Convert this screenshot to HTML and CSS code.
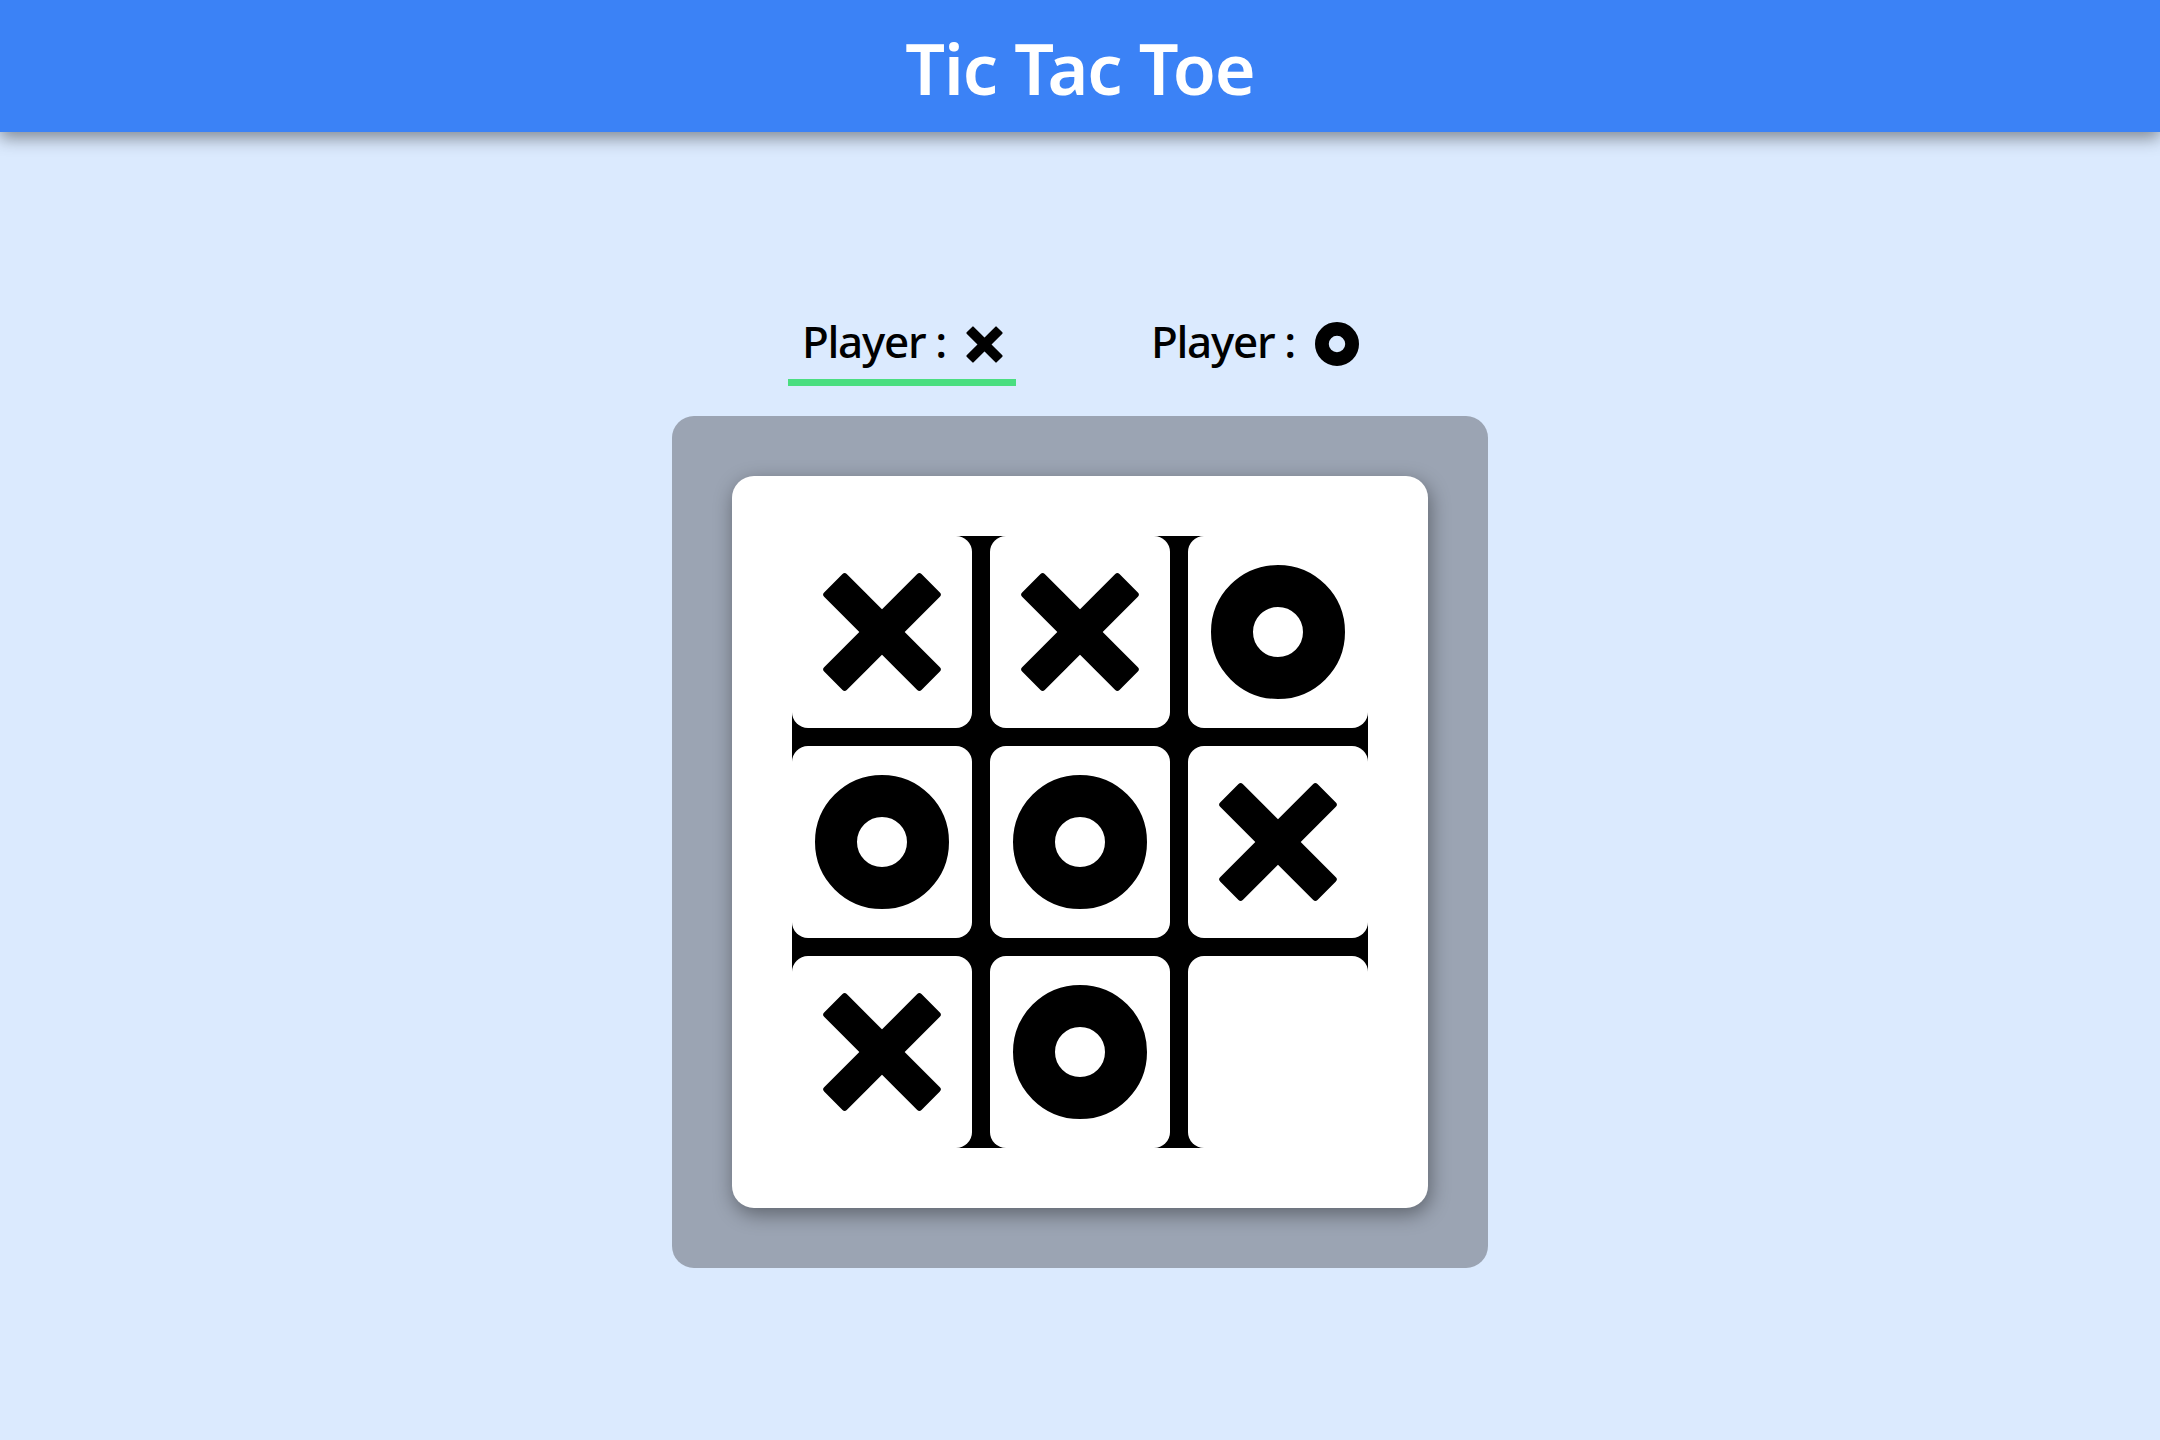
FILE: index.html
```html
<!DOCTYPE html>
<html lang="en">
<head>
<meta charset="utf-8">
<title>Tic Tac Toe</title>
<link rel="stylesheet" href="styles.css">
</head>
<body>
<svg class="defs" width="0" height="0" aria-hidden="true">
  <defs>
    <symbol id="mark-x" viewBox="0 0 120 120">
      <g transform="rotate(45 60 60)">
        <rect x="-8.85" y="44" width="137.7" height="32" rx="3"/>
        <rect x="44" y="-8.85" width="32" height="137.7" rx="3"/>
      </g>
    </symbol>
    <symbol id="mark-o" viewBox="0 0 134 134">
      <circle cx="67" cy="67" r="46" fill="none" stroke="currentColor" stroke-width="42"/>
    </symbol>
  </defs>
</svg>
<header class="topbar">
  <h1 class="title">Tic Tac Toe</h1>
</header>
<main class="game">
  <div class="players">
    <div class="player player--active">
      <span class="player-label">Player :</span>
      <svg class="player-icon player-icon--x"><use href="#mark-x"/></svg>
    </div>
    <div class="player">
      <span class="player-label">Player :</span>
      <svg class="player-icon player-icon--o"><use href="#mark-o"/></svg>
    </div>
  </div>
  <div class="board-frame">
    <div class="board">
      <div class="grid">
        <div class="cell"><svg class="mark mark--x"><use href="#mark-x"/></svg></div>
        <div class="cell"><svg class="mark mark--x"><use href="#mark-x"/></svg></div>
        <div class="cell"><svg class="mark mark--o"><use href="#mark-o"/></svg></div>
        <div class="cell"><svg class="mark mark--o"><use href="#mark-o"/></svg></div>
        <div class="cell"><svg class="mark mark--o"><use href="#mark-o"/></svg></div>
        <div class="cell"><svg class="mark mark--x"><use href="#mark-x"/></svg></div>
        <div class="cell"><svg class="mark mark--x"><use href="#mark-x"/></svg></div>
        <div class="cell"><svg class="mark mark--o"><use href="#mark-o"/></svg></div>
        <div class="cell"></div>
      </div>
    </div>
  </div>
</main>
</body>
</html>
```

FILE: styles.css
```css
* {
  box-sizing: border-box;
}

html, body {
  margin: 0;
  padding: 0;
}

body {
  min-height: 100vh;
  background: #dbeafe;
  font-family: "Noto Sans", "Open Sans", sans-serif;
  color: #000;
}

.defs {
  position: absolute;
  width: 0;
  height: 0;
  overflow: hidden;
}

.topbar {
  height: 132px;
  background: #3b82f6;
  box-shadow: 0 6px 16px rgba(0, 0, 0, 0.42);
  display: flex;
  justify-content: center;
  align-items: flex-start;
  position: relative;
  z-index: 1;
}

.title {
  margin: 0;
  padding-top: 21px;
  font-size: 70px;
  line-height: 95px;
  font-weight: 600;
  letter-spacing: -1px;
  color: #fff;
}

.game {
  display: flex;
  flex-direction: column;
  align-items: center;
  padding-top: 179px;
}

.players {
  display: flex;
  justify-content: center;
  gap: 121px;
}

.player {
  display: flex;
  align-items: center;
  padding: 0 13px 8px 14px;
  border-bottom: 7px solid transparent;
}

.player--active {
  border-bottom-color: #4ade80;
}

.player-label {
  font-size: 44px;
  line-height: 60px;
  font-weight: 500;
  letter-spacing: -1.3px;
}

.player-icon {
  fill: #000;
  color: #000;
  margin-left: 20px;
  margin-top: 6px;
}

.player-icon--x {
  width: 37px;
  height: 37px;
}

.player-icon--o {
  width: 44px;
  height: 44px;
}

.board-frame {
  margin-top: 30px;
  padding: 60px;
  background: #9ba4b3;
  border-radius: 22px;
}

.board {
  padding: 60px;
  background: #fff;
  border-radius: 22px;
  box-shadow: 2px 6px 20px rgba(0, 0, 0, 0.4);
}

.grid {
  display: grid;
  grid-template-columns: repeat(3, 180px);
  grid-template-rows: repeat(3, 192px);
  gap: 18px;
  background: #000;
}

.cell {
  background: #fff;
  border-radius: 16px;
  display: flex;
  align-items: center;
  justify-content: center;
}

.cell:nth-child(1) {
  border-top-left-radius: 0;
}

.cell:nth-child(3) {
  border-top-right-radius: 0;
}

.cell:nth-child(7) {
  border-bottom-left-radius: 0;
}

.cell:nth-child(9) {
  border-bottom-right-radius: 0;
}

.mark {
  fill: #000;
  color: #000;
  overflow: visible;
}

.mark--x {
  width: 120px;
  height: 120px;
}

.mark--o {
  width: 134px;
  height: 134px;
}
```
